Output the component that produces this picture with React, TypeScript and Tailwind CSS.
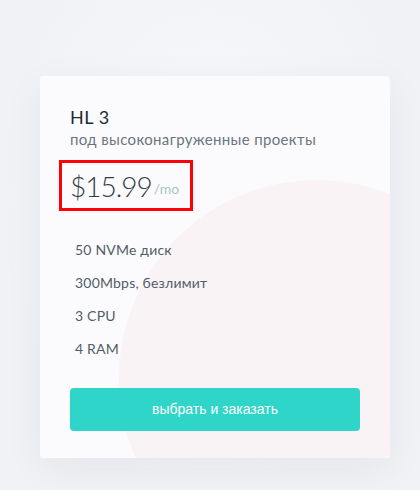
import React from "react";

export default function App() {
  const features = ["50 NVMe диск", "300Mbps, безлимит", "3 CPU", "4 RAM"];
  return (
    <div className="w-[420px] h-[490px] bg-[#f3f4f7] bg-[radial-gradient(ellipse_at_50%_40%,#f8f9fb_0%,#f1f2f5_70%)] overflow-hidden pt-[76px] pl-[40px]" style={{ fontFamily: "Lato, 'Noto Sans', sans-serif" }}>
      <div className="relative w-[350px] h-[382px] bg-[#fbfbfd] rounded-[3px] overflow-hidden shadow-[0_10px_40px_rgba(30,40,80,0.06)]">
        <div className="absolute left-[79px] top-[104px] w-[396px] h-[396px] rounded-full bg-[#f9f3f6]" />
        <div className="relative flex flex-col pl-[30px] pt-[30px]">
          <div className="text-[18px] leading-[22px] font-normal text-[#222a31] tracking-[0.6px]">HL 3</div>
          <div className="text-[15px] leading-[20px] text-[#6b757e] mt-[1px] tracking-[0.35px]">под высоконагруженные проекты</div>
          <div className="relative mt-[11px] ml-[-11px] w-[134px] h-[51px] border-[3px] border-[#ff0000] flex items-end pl-[8px] pb-[4px]">
            <span className="text-[28px] leading-[36px] font-light text-[#333c45] tracking-[-1px]">$15.99</span>
            <span className="text-[14px] leading-[20px] text-[#a8c3c6] mb-[5px] ml-[2px]">/mo</span>
          </div>
          <div className="flex flex-col mt-[30px] pl-[5px] gap-[15px]">
            {features.map((f) => (
              <div key={f} className="text-[14px] leading-[18px] text-[#525c66] tracking-[0.2px]">{f}</div>
            ))}
          </div>
          <button className="mt-[30px] w-[290px] h-[43px] rounded-[4px] bg-[#2fd5c8] text-white text-[14px]" style={{ fontFamily: "'Liberation Sans', Arial, sans-serif" }}>
            выбрать и заказать
          </button>
        </div>
      </div>
    </div>
  );
}
